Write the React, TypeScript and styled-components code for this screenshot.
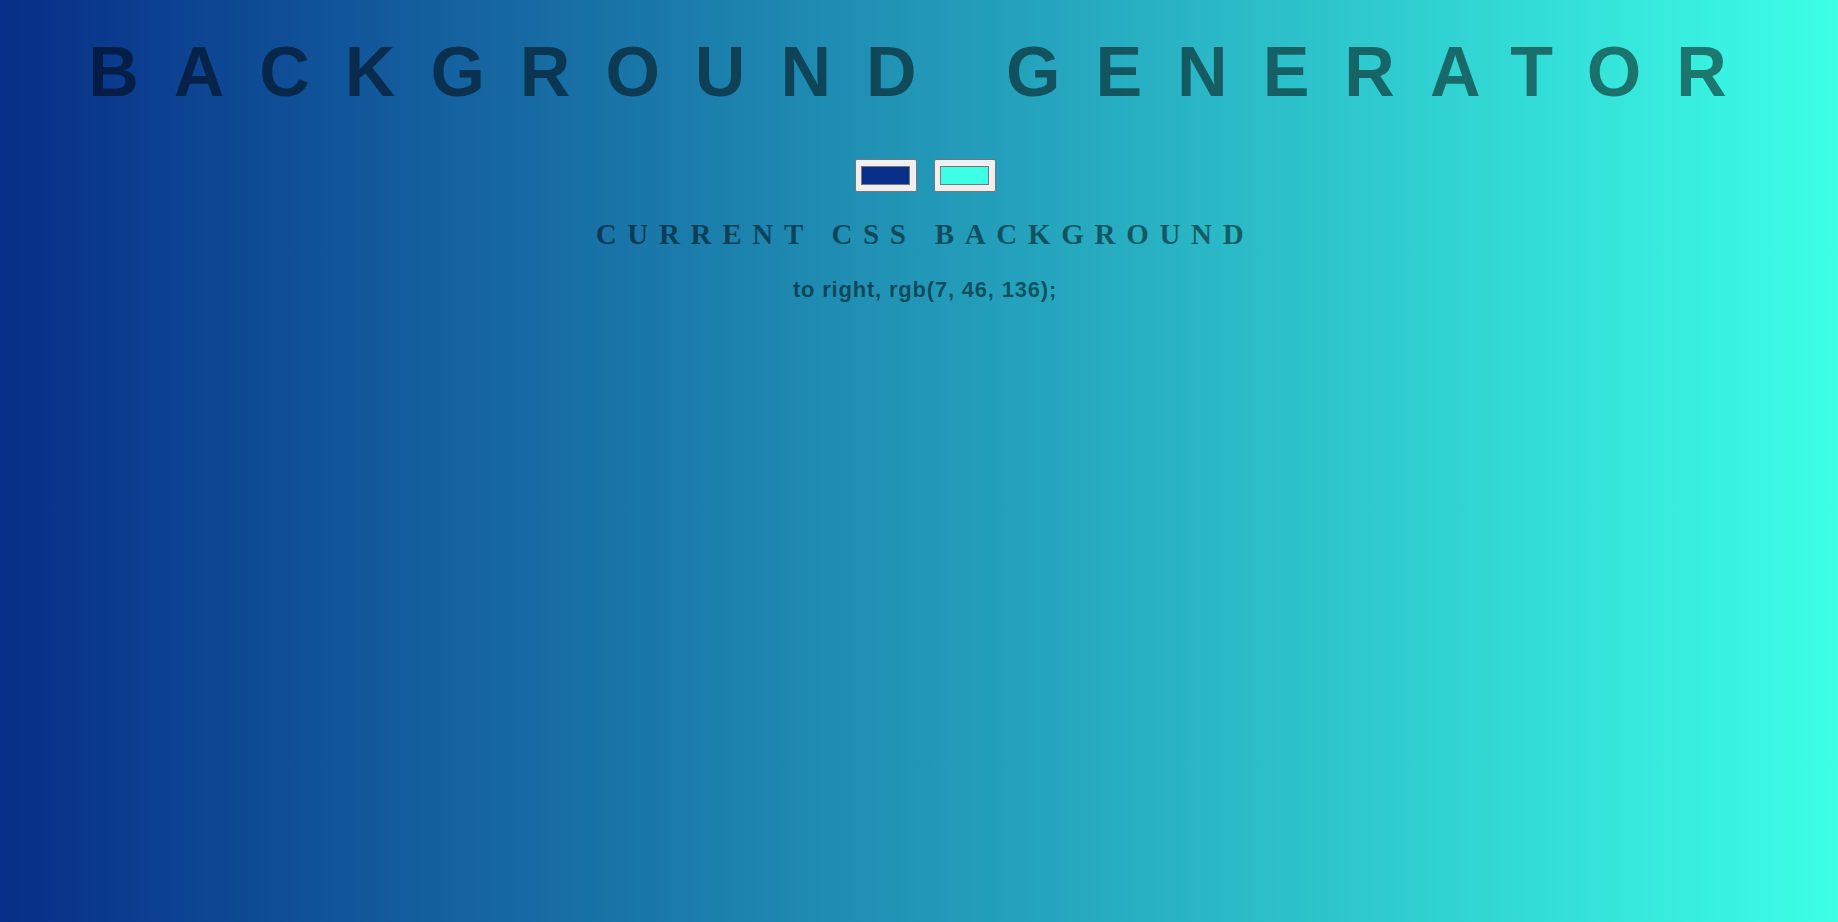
import React, { useState } from "react";
import styled, { createGlobalStyle } from "styled-components";

const GlobalStyle = createGlobalStyle`
  html, body {
    margin: 0;
    padding: 0;
  }
  body {
    font-family: "Liberation Sans", Arial, sans-serif;
  }
`;

const Page = styled.div<{ $from: string; $to: string }>`
  min-height: 100vh;
  box-sizing: border-box;
  padding: 32px 0 0 12px;
  display: flex;
  flex-direction: column;
  align-items: center;
  background: linear-gradient(to right, ${(p) => p.$from}, ${(p) => p.$to});
  color: rgba(0, 0, 0, 0.5);
  text-align: center;
`;

const Title = styled.h1`
  margin: 0;
  font-family: "Liberation Sans", Arial, sans-serif;
  font-weight: 700;
  font-size: 70px;
  line-height: 80px;
  letter-spacing: 35px;
  white-space: nowrap;
`;

const Pickers = styled.div`
  display: flex;
  gap: 17px;
  margin-top: 47px;
`;

const ColorInput = styled.input`
  -webkit-appearance: none;
  appearance: none;
  box-sizing: border-box;
  width: 62px;
  height: 33px;
  margin: 0;
  padding: 0;
  border: 1px solid #767676;
  border-radius: 2px;
  background: #efefef;
  cursor: pointer;

  &::-webkit-color-swatch-wrapper {
    padding: 6px 6px 6px 5px;
  }
  &::-webkit-color-swatch {
    border: 1px solid #777777;
    border-radius: 0;
  }
`;

const Subtitle = styled.h3`
  margin: 25px 0 0;
  font-family: "Liberation Serif", "Times New Roman", serif;
  font-weight: 700;
  font-size: 29px;
  line-height: 34px;
  letter-spacing: 10.7px;
  white-space: nowrap;
`;

const Output = styled.h3`
  margin: 26px 0 0;
  font-family: "Liberation Sans", Arial, sans-serif;
  font-weight: 700;
  font-size: 22px;
  line-height: 25px;
  letter-spacing: 0.8px;
  white-space: nowrap;
`;

export default function App() {
  const [color1, setColor1] = useState("#072e88");
  const [color2, setColor2] = useState("#3cffe6");

  return (
    <>
      <GlobalStyle />
      <Page $from={color1} $to={color2}>
        <Title>BACKGROUND GENERATOR</Title>
        <Pickers>
          <ColorInput
            type="color"
            value={color1}
            onChange={(e) => setColor1(e.target.value)}
          />
          <ColorInput
            type="color"
            value={color2}
            onChange={(e) => setColor2(e.target.value)}
          />
        </Pickers>
        <Subtitle>CURRENT CSS BACKGROUND</Subtitle>
        <Output>to right, rgb(7, 46, 136);</Output>
      </Page>
    </>
  );
}
